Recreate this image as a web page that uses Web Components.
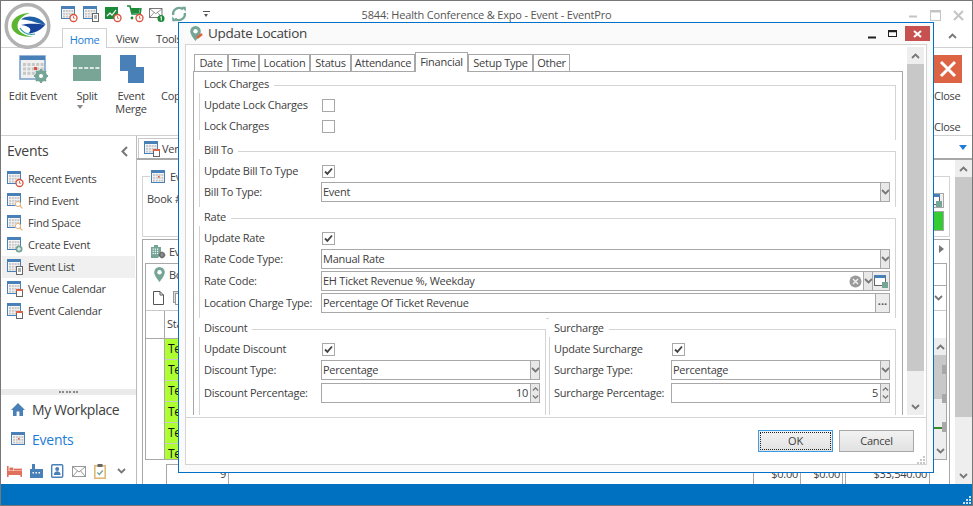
<!DOCTYPE html>
<html lang="en"><head><meta charset="utf-8"><title>EventPro</title>
<style>
html,body{margin:0;padding:0;background:#fff}
body{font:11px "Open Sans","Noto Sans","Liberation Sans",sans-serif;letter-spacing:-.25px;color:#404040;width:973px;height:506px;overflow:hidden}
</style></head><body>
<app-window>
  <title-bar slot="title">5844: Health Conference &amp; Expo - Event - EventPro</title-bar>
  <ribbon-tabs slot="tabs"></ribbon-tabs>
  <ribbon-bar slot="ribbon"></ribbon-bar>
  <side-nav slot="nav"></side-nav>
  <work-area slot="work"></work-area>
  <status-bar slot="status"></status-bar>
  <update-dialog slot="dialog"></update-dialog>
</app-window>
<script>
const BL='#4a80b8',TEAL='#74a596',GR='#a8a8a8';
function grid(x,y,cols,rows,s,g,c){let o='';for(let j=0;j<rows;j++)for(let i=0;i<cols;i++)o+=`<rect x="${x+i*(s+g)}" y="${y+j*(s+g)}" width="${s}" height="${s}" fill="${c}"/>`;return o}
const cal=(c=BL)=>`<rect x=".5" y=".5" width="13" height="12" fill="#f5f5f5" stroke="${c}"/><rect x="1" y="1" width="12" height="2" fill="${c}"/>`+grid(2,4,4,3,2,.8,'#c9c9c9');
const redClock=`<circle cx="12.5" cy="12" r="3.5" fill="#fff" stroke="#d9503c" stroke-width="1.3"/><path d="M12.5 10v2.2h1.6" stroke="#d9503c" fill="none" stroke-width=".8"/>`;
const ICONS={
 'cal-clock':[16,16,cal()+redClock],
 'cal-doc':[16,16,cal()+`<rect x="9.5" y="7.5" width="6" height="8" fill="#fff" stroke="#666"/><path d="M11 10h3M11 12h3" stroke="#666"/>`],
 'cal-search':[16,16,cal()+`<circle cx="11" cy="11" r="2.6" fill="#fff" stroke="#e8b27a"/><path d="M13 13l2.4 2.4" stroke="#e8b27a" stroke-width="1.2"/>`],
 'cal-plus':[16,16,cal()+`<circle cx="12" cy="12" r="3.5" fill="${TEAL}"/><path d="M10 12h4M12 10v4" stroke="#fff"/>`],
 'cal-cal':[16,16,cal()+`<rect x="9.5" y="8.5" width="6" height="7" fill="#fff" stroke="#666"/><rect x="9" y="8" width="7" height="2" fill="#dc6444"/>`],
 'cal':[15,14,cal()+`<rect x="7" y="6" width="1.6" height="1.6" fill="#d9503c"/>`],
 'chart-clock':[16,16,`<rect x="0" y="1" width="13" height="12" fill="#1d8a3a"/><path d="M2 10l3-3 2 2 4-5" stroke="#fff" stroke-width="1.2" fill="none"/>`+redClock],
 'cart-clock':[16,18,`<path d="M0 1h3l2 8h8l1-6" stroke="#1d8a3a" stroke-width="1.6" fill="none"/><path d="M4 3h9l-1 5H5z" fill="#1d8a3a"/><circle cx="5" cy="13" r="1.4" fill="#1d8a3a"/>`+redClock.replace(/cy="12"/,'cy="13"').replace('M12.5 10v2.2h1.6','M12.5 11v2.2h1.6')],
 'mail-one':[16,16,`<rect x=".5" y="2.5" width="12.5" height="9" fill="#fff" stroke="#777"/><path d="M1 3l5.7 4.6L13 3M1 11l4.2-4.6M13 11L8.4 6.6" stroke="#777" fill="none" stroke-width=".8"/><circle cx="12" cy="12.5" r="3.5" fill="#1d8a3a"/><path d="M11.3 11.2l1-.7v4" stroke="#fff" fill="none"/>`],
 'sync':[16,16,`<path d="M2.2 9A6 6 0 0 1 12 3.4" stroke="#74a596" stroke-width="2.4" fill="none"/><path d="M10.2 .8h4.6v4.6z" fill="#74a596"/><path d="M13.8 7A6 6 0 0 1 4 12.6" stroke="#74a596" stroke-width="2.4" fill="none"/><path d="M5.8 15.2H1.2v-4.6z" fill="#74a596"/>`],
 'edit-event':[29,28,`<rect x="1" y="1" width="25" height="23" fill="#f0f0f0" stroke="#7ea3cc" stroke-width="1.6"/><rect x="1" y="1" width="25" height="4" fill="${BL}"/>`+grid(4,8,5,3,3,1.4,'#c8c8c8')+`<rect x="15" y="12" width="3" height="3" fill="#d9503c"/><circle cx="22" cy="21" r="4.6" fill="none" stroke="${TEAL}" stroke-width="3"/><path d="M22 14v14M15 21h14M17 16l10 10M27 16L17 26" stroke="${TEAL}" stroke-width="2"/><circle cx="22" cy="21" r="2" fill="#fff"/>`],
 'split':[28,26,`<rect width="28" height="26" fill="#78a595"/><path d="M0 13h28" stroke="#fff" stroke-width="1.4" stroke-dasharray="4 1.6"/>`],
 'merge':[24,28,`<rect x="0" y="0" width="16" height="16" fill="#4a80b8"/><rect x="8" y="12" width="16" height="16" fill="#4a80b8"/>`],
 'close':[28,28,`<rect width="28" height="28" fill="#dc6444"/><path d="M7 7l14 14M21 7L7 21" stroke="#fff" stroke-width="3"/>`],
 'pin':[11,15,`<path d="M5.5 0A5.3 5.3 0 0 0 .2 5.3C.2 9 5.5 15 5.5 15s5.3-6 5.3-9.7A5.3 5.3 0 0 0 5.5 0z" fill="${TEAL}"/><circle cx="5.5" cy="5.3" r="2.2" fill="#fff"/>`],
 'pin-edit':[14,15,`<path d="M5.5 0A5.3 5.3 0 0 0 .2 5.3C.2 9 5.5 15 5.5 15s5.3-6 5.3-9.7A5.3 5.3 0 0 0 5.5 0z" fill="${TEAL}"/><circle cx="5.5" cy="5.3" r="2.2" fill="#fff"/><path d="M7 12l5-4" stroke="#e0603e" stroke-width="2.4"/>`],
 'bld-gear':[16,15,`<path d="M1 14V3h3V1h4v2h3v6l-3 5z" fill="${TEAL}"/>`+grid(2.6,4.5,3,3,1.2,1,'#fff')+`<circle cx="12" cy="11" r="2.2" fill="#fff" stroke="#666" stroke-width="1.6"/><path d="M12 7.5v7M8.5 11h7" stroke="#666" stroke-width="1"/>`],
 'page':[11,14,`<path d="M.5.5h6.5l3.5 3.5v9.5H.5z" fill="#fff" stroke="#555"/><path d="M7 .5V4h3.5" fill="none" stroke="#555"/>`],
 'page2':[11,14,`<rect x=".5" y=".5" width="8" height="11" fill="#ddd" stroke="#999"/><rect x="2.5" y="2.5" width="8" height="11" fill="#fff" stroke="#999"/>`],
 'house':[14,13,`<path d="M7 0L0 7h2v6h3.6V8.6h2.8V13H12V7h2z" fill="${BL}"/>`],
 'bed':[15,11,`<path d="M0 0h1.6v5H15v6h-1.6V9H1.6v2H0z" fill="#e0705a"/><rect x="2.4" y="1.6" width="4" height="3" fill="#e0705a"/><rect x="7" y="2.6" width="8" height="2" fill="#e0705a"/>`],
 'factory':[13,14,`<path d="M2 0h3v5h8v9H0V5h2z" fill="${BL}"/>`+grid(2.5,8,3,1,1.5,1.5,'#fff')],
 'contact':[13,14,`<rect x=".7" y=".7" width="11" height="12.6" rx="1" fill="#fff" stroke="${BL}" stroke-width="1.4"/><circle cx="6.2" cy="5" r="2" fill="${BL}"/><path d="M2.8 11c0-5 6.8-5 6.8 0z" fill="${BL}"/>`],
 'mail':[14,11,`<rect x=".5" y=".5" width="13" height="10" fill="#fff" stroke="#999"/><path d="M1 1l6 5 6-5M1 10l4.4-5M13 10L8.6 5" stroke="#999" fill="none"/>`],
 'clip':[12,15,`<rect x=".8" y="1.8" width="10.4" height="12.4" fill="#fff" stroke="#e0b878" stroke-width="1.6"/><rect x="3.5" y="0" width="5" height="3" fill="#666"/><path d="M3.4 8.5l2 2 3.4-4" stroke="${TEAL}" stroke-width="1.4" fill="none"/>`],
 'chev-down':[9,6,`<path d="M1 1l3.5 3.5L8 1" fill="none" stroke="#777" stroke-width="1.8"/>`],
 'chev-up':[9,6,`<path d="M1 5l3.5-3.5L8 5" fill="none" stroke="#777" stroke-width="1.8"/>`],
 'chev-left':[7,11,`<path d="M6 1L1.5 5.5 6 10" fill="none" stroke="#777" stroke-width="2"/>`],
 'lookup':[14,13,`<rect x=".5" y=".5" width="11" height="10" fill="#fff" stroke="#666"/><rect x="0" y="0" width="12" height="3" fill="${BL}"/><rect x="8" y="7" width="6" height="6" fill="#74a596"/>`],
};
function def(name,css,html,extra){
  class E extends HTMLElement{
    constructor(){super();this.attachShadow({mode:'open'}).innerHTML=`<style>${css}</style>${html}`;if(extra)extra.call(this)}
  }
  customElements.define(name,E);
}
class AppIcon extends HTMLElement{
  constructor(){super();this.attachShadow({mode:'open'})}
  connectedCallback(){const[w,h,b]=ICONS[this.getAttribute('name')];
    this.shadowRoot.innerHTML=`<style>:host{display:inline-flex;flex:none;width:${w}px;height:${h}px}svg{display:block;overflow:visible}</style><svg width="${w}" height="${h}" viewBox="0 0 ${w} ${h}">${b}</svg>`}
}
customElements.define('app-icon',AppIcon);

def('app-window',`
 :host{display:block;position:relative;box-sizing:border-box;width:973px;height:506px;border:1px solid #777;background:#fff;overflow:hidden}
 .body{display:flex;height:348px}
 .dlg{position:absolute;left:177px;top:21px}
 .logo{position:absolute;left:3px;top:2px}
`,`<slot name="title"></slot><slot name="tabs"></slot><slot name="ribbon"></slot>
 <div class="body"><slot name="nav"></slot><slot name="work"></slot></div>
 <slot name="status"></slot>
 <svg class="logo" width="47" height="46" viewBox="0 0 47 46">
  <circle cx="23.5" cy="23" r="21.3" fill="#fff" stroke="#b2b2b2" stroke-width="3.5"/>
  <path d="M26 10C15 10 7.500 16 7.500 22.500 7.500 29 16 35 29 33.500 21 33 13.500 29 13.500 23 13.500 17 19 12 26 10z" fill="#5cb531"/>
  <path d="M17 16.500C23 11 36 13 41.500 21.500 36 21.500 24 16 17 16.500z" fill="#1e5fa8"/>
  <path d="M17 22C24 20 35 21 41.500 21.500 37 27 31 30 24 30.500 29 27 26 23 17 22z" fill="#17449a"/>
  <path d="M16 25c3 5 9 7 15 6" stroke="#2c9fb0" stroke-width="1.200" fill="none"/>
 </svg>
 <div class="dlg"><slot name="dialog"></slot></div>`);

def('title-bar',`
 :host{display:grid;grid-template-columns:1fr auto 1fr;align-items:center;height:24px;color:#555;letter-spacing:-.18px}
 .q{display:flex;align-items:center;padding-left:60px;gap:6px;height:16px;margin-top:1px}
 .t{margin-top:2px}
 .c{display:flex;justify-content:flex-end;align-items:center;gap:12px;padding-right:8px;margin-top:4px}
 .dd{margin-left:10px;width:7px;height:5px;border-top:1px solid #555;position:relative}
 .dd::after{content:"";position:absolute;left:1px;top:2px;border:2.5px solid transparent;border-top:3px solid #555;border-bottom:0}
`,`<div class="q"><app-icon name="cal-clock"></app-icon><app-icon name="cal-doc"></app-icon><app-icon name="chart-clock"></app-icon><app-icon name="cart-clock"></app-icon><app-icon name="mail-one"></app-icon><app-icon name="sync"></app-icon><span class="dd"></span></div>
 <div class="t"><slot></slot></div>
 <div class="c"><svg width="10" height="10"><path d="M1 6.500h8" stroke="#c4c4c4" stroke-width="2"/></svg><svg width="11" height="11"><rect x=".5" y=".5" width="10" height="10" fill="none" stroke="#c4c4c4"/><path d="M0 1.500h11" stroke="#c4c4c4" stroke-width="2"/></svg><svg width="11" height="11"><path d="M1 1l9 9M10 1l-9 9" stroke="#c4c4c4" stroke-width="2"/></svg></div>`);

def('ribbon-tabs',`
 :host{display:flex;height:23px;box-sizing:border-box;border-bottom:1px solid #d0d0d0;padding-left:61px;align-items:flex-end;font-size:11px;letter-spacing:-.4px;position:relative}
 span{display:block;line-height:17px}
 .h{box-sizing:border-box;width:45px;height:20px;border:1px solid #d0d0d0;border-bottom:0;background:#fff;color:#1c7cd6;text-align:center;margin-bottom:-1px;padding-top:2px}
 .v{margin-left:9px;width:40px}
 .e{margin-left:auto;margin-right:15px;align-self:center}
`,`<span class="h">Home</span><span class="v">View</span><span>Tools</span><app-icon class="e" name="chev-up"></app-icon>`);

def('ribbon-item',`
 :host{display:flex;flex-direction:column;align-items:center;box-sizing:border-box;padding-top:7px;text-align:center;flex:none;line-height:13px}
 .i{height:28px;display:flex;margin-bottom:6px}
 span{white-space:pre-line}
`,`<div class="i"><slot name="icon"></slot></div><span><slot></slot></span>`);

def('ribbon-bar',`
 :host{display:flex;height:88px;box-sizing:border-box;border-bottom:1px solid #d0d0d0;color:#404040}
 .close{margin-left:auto;width:38px;display:flex;flex-direction:column;align-items:flex-start;padding-top:7px;line-height:13px}
 .close .l{margin-top:6px}.close .m{margin-top:18px}
 .down{align-self:center;width:0;height:0;margin-top:3px;border:3px solid transparent;border-top:4px solid #888;border-bottom:0;display:block}
 .cop{padding-left:11px;margin-top:41px;line-height:13px}
`,`<ribbon-item style="width:58px;margin-left:3px"><app-icon slot="icon" name="edit-event"></app-icon>Edit Event</ribbon-item>
 <ribbon-item style="width:50px"><app-icon slot="icon" name="split"></app-icon>Split<i class="down"></i></ribbon-item>
 <ribbon-item style="width:38px"><app-icon slot="icon" name="merge" style="margin-left:2px"></app-icon>Event
Merge</ribbon-item>
 <div class="cop">Cop</div>
 <div class="close"><app-icon name="close"></app-icon><span class="l">Close</span><span class="m">Close</span></div>`);

def('nav-item',`
 :host{display:flex;align-items:center;gap:5px;height:22px;padding-left:5px;margin:0 1px;font-size:11px;line-height:20px}
 :host([active]){background:#f0f0f0}
`,`<slot name="icon"></slot><slot></slot>`);

def('side-nav',`
 :host{display:flex;flex-direction:column;width:136px;flex:none;box-sizing:border-box;border-right:1px solid #bcbcbc}
 .h{display:flex;align-items:center;justify-content:space-between;height:30px;padding:0 8px 0 6px;font-size:14px;margin-bottom:2px}
 .h span{margin-top:-1px}
 .sp{flex:1}
 .split{height:6px;background:#ebebeb;display:flex;justify-content:center;align-items:center}
 .split i{width:19px;height:2px;background:repeating-linear-gradient(90deg,#888 0 2px,transparent 2px 3.400px)}
 .big{display:flex;align-items:center;gap:7px;height:30px;box-sizing:border-box;padding:0 0 2px 10px;font-size:14px;letter-spacing:-.4px}
 .blue{color:#1c7cd6;letter-spacing:-.25px;gap:6px}
 .ic{display:flex;align-items:center;height:29px;box-sizing:border-box;padding:3px 0 0 6px;gap:8px}
`,`<div class="h"><span>Events</span><app-icon name="chev-left"></app-icon></div>
 <nav-item><app-icon slot="icon" name="cal-clock"></app-icon>Recent Events</nav-item>
 <nav-item><app-icon slot="icon" name="cal-search"></app-icon>Find Event</nav-item>
 <nav-item><app-icon slot="icon" name="cal-search"></app-icon>Find Space</nav-item>
 <nav-item><app-icon slot="icon" name="cal-plus"></app-icon>Create Event</nav-item>
 <nav-item active><app-icon slot="icon" name="cal-doc"></app-icon>Event List</nav-item>
 <nav-item><app-icon slot="icon" name="cal-cal"></app-icon>Venue Calendar</nav-item>
 <nav-item><app-icon slot="icon" name="cal-cal"></app-icon>Event Calendar</nav-item>
 <div class="sp"></div><div class="split"><i></i></div>
 <div class="big"><app-icon name="house"></app-icon><span>My Workplace</span></div>
 <div class="big blue"><app-icon name="cal"></app-icon><span>Events</span></div>
 <div class="ic"><app-icon name="bed"></app-icon><app-icon name="factory"></app-icon><app-icon name="contact"></app-icon><app-icon name="mail"></app-icon><app-icon name="clip"></app-icon><app-icon name="chev-down" style="margin-left:3px"></app-icon></div>`);

def('v-scroll',`
 :host{display:flex;flex-direction:column;width:var(--w,17px);flex:none;background:#eee}
 .b{height:var(--bh,17px);display:flex;align-items:center;justify-content:center;flex:none}
 .t{height:var(--th,240px);background:#c8c8c8;flex:none}
 .s{flex:1}
`,`<div class="b"><app-icon name="chev-up"></app-icon></div><div class="t"></div><div class="s"></div><div class="b"><app-icon name="chev-down"></app-icon></div>`);

def('work-area',`
 :host{display:flex;flex-direction:column;flex:1;min-width:0;overflow:hidden}
 .strip{display:flex;height:24px;box-sizing:border-box;border-bottom:2px solid #a8a8a8;padding:2px 5px 0 1px;justify-content:space-between}
 .tab{display:flex;align-items:center;gap:2px;width:60px;box-sizing:border-box;border:1px solid #c8c8c8;border-bottom:0;padding-left:5px}
 .arr{align-self:center;margin-top:-2px;width:0;height:0;border:4px solid transparent;border-top:5px solid #1c7cd6;border-bottom:0}
 .main{display:flex;flex:1;min-height:0}
 .col{flex:1;min-width:0;display:flex;flex-direction:column;padding:16px 5px 0 5px;box-sizing:border-box}
 .g1{box-sizing:border-box;height:61px;border:1px solid #d4d4d4;display:flex;justify-content:space-between;position:relative;padding:16px 5px 0 4px}
 .g1>span{margin-top:-2px}
 .lg{position:absolute;left:7px;top:-8px;display:flex;align-items:center;gap:4px;background:#fff;padding:0 1px}
 .rc{display:flex;flex-direction:column;gap:3px}
 .btn{width:30px;height:15px;box-sizing:border-box;border:1px solid ${GR};background:#eee;display:flex;justify-content:flex-end;align-items:center;padding-right:1px}
 .grn{width:30px;height:20px;box-sizing:border-box;border:1px solid ${GR};background:#33cc33}
 .g2{flex:1;margin-top:2px;border:1px solid ${GR};border-bottom:0;display:flex;flex-direction:column;min-height:0;padding:0 2px}
 .head{height:24px;display:flex;align-items:center;gap:3px;padding-left:5px;position:relative}
 .tri{position:absolute;right:3px;top:5px;width:0;height:0;border:4px solid transparent;border-left:5px solid #777;border-right:0}
 .g3{height:197px;flex:none;box-sizing:border-box;border:1px solid ${GR};display:flex;flex-direction:column}
 .bo{height:21px;display:flex;align-items:center;gap:4px;padding-left:8px}
 .tb{height:26px;flex:none;display:flex;align-items:center;gap:9px;padding:0 0 0 7px;border-bottom:1px solid #c8c8c8;box-sizing:border-box;position:relative}
 .dbox{position:absolute;right:0;top:0;width:40px;height:25px;border-top:1px solid ${GR};display:flex;align-items:center;justify-content:flex-end;padding-right:3px;box-sizing:border-box}
 .hdr{height:28px;display:flex;border-bottom:1px solid ${GR};box-sizing:border-box;flex:none}
 .hdr i{display:block;width:18px;border-right:1px solid ${GR}}
 .hdr span{padding:5px 0 0 2px;font-size:11px}
 .rows{flex:1;display:flex;min-height:0}
 .gut{width:18px;flex:none;border-right:1px solid ${GR}}
 .cells{width:40px;flex:none}
 .cell{height:21px;box-sizing:border-box;background:#adff2f;border-bottom:1px solid #c8c8c8;padding-left:3px;color:#111;font-size:12px;line-height:20px}
 .cell:last-child{height:15px;border-bottom:0}
 .rp{margin:-1px 0 0 auto;position:relative;flex:none;width:12px;--w:12px;--bh:17px;--th:44px;display:flex}
 .mk{position:absolute;right:0;width:4px;background:#a8a8a8}
 .gl{position:absolute;right:4px;top:89px;width:8px;height:1.500px;background:#3a8a30}
 .foot{flex:1;display:flex;padding:4px 0 0 21px;text-align:right}
 .c{box-sizing:border-box;border:1px solid ${GR};border-bottom:0;padding:1px 2px 0 0;height:20px}
`,`<div class="strip"><div class="tab"><app-icon name="cal-cal"></app-icon><span>Ven</span></div><i class="arr"></i></div>
 <div class="main"><div class="col">
   <div class="g1"><div class="lg"><app-icon name="cal"></app-icon><span>Ev</span></div><span>Book #</span><div class="rc"><div class="btn"><app-icon name="lookup"></app-icon></div><div class="grn"></div></div></div>
   <div class="g2">
     <div class="head"><app-icon name="bld-gear"></app-icon><span>Ev</span><i class="tri"></i></div>
     <div class="g3">
       <div class="bo"><app-icon name="pin"></app-icon><span>Bo</span></div>
       <div class="tb"><app-icon name="page"></app-icon><app-icon name="page2"></app-icon><div class="dbox"><app-icon name="chev-down"></app-icon></div></div>
       <div class="hdr"><i></i><span>Sta</span></div>
       <div class="rows"><div class="gut"></div><div class="cells"><div class="cell">Te</div><div class="cell">Te</div><div class="cell">Te</div><div class="cell">Te</div><div class="cell">Te</div><div class="cell">Te</div></div>
         <div class="rp"><v-scroll></v-scroll><i class="mk" style="top:27px;height:9px"></i><i class="mk" style="top:56px;height:9px"></i><i class="mk" style="top:84px;height:10px"></i><i class="gl"></i></div></div>
     </div>
     <div class="foot"><div class="c" style="width:63px">9</div><div style="width:524px"></div><div class="c" style="width:48px">$0.00</div><div class="c" style="width:42px;border-left:0">$0.00</div><div class="c" style="width:85px;margin-left:2px">$33,540.00</div></div>
   </div>
 </div><v-scroll></v-scroll></div>`);

def('status-bar',`
 :host{display:flex;justify-content:flex-end;align-items:flex-end;height:21px;background:#0070c0;padding:0 1px 1px 0;box-sizing:border-box}
`,`<svg width="9" height="9"><path d="M7 1h2v2H7zM4 4h2v2H4zM7 4h2v2H7zM1 7h2v2H1zM4 7h2v2H4zM7 7h2v2H7z" fill="#cfe2f3"/></svg>`);

def('form-group',`
 :host{display:block;flex:1;min-width:0;margin-top:4px}
 fieldset{margin:0;padding:2px 5px var(--pb,3px) 4px;border:1px solid #d4d4d4;border-bottom:0;min-width:0}
 legend{padding:0 5px;margin-left:-5px;line-height:11px;height:15px;box-sizing:border-box}
`,`<fieldset><legend><slot name="t"></slot></legend><slot></slot></fieldset>`);

def('form-row',`
 :host{display:grid;grid-template-columns:117px 1fr;height:22px;align-items:start}
 :host([check]){height:21px}
 :host([tall]){height:23px}
 .l{line-height:20px;white-space:nowrap}
`,`<div class="l"><slot name="l"></slot></div><div><slot></slot></div>`);

def('check-box',`
 :host{display:block;box-sizing:border-box;width:13px;height:13px;border:1px solid ${GR};margin:4px 0 0 1px;background:#fff}
 svg{display:none}
 :host([on]) svg{display:block}
`,`<svg width="11" height="11"><path d="M2 5.500l2.400 2.400L9 2.500" fill="none" stroke="#444" stroke-width="1.800"/></svg>`);

def('combo-box',`
 :host{display:flex;box-sizing:border-box;height:20px;border:1px solid ${GR};background:#fff;align-items:stretch}
 .tx{flex:1;padding-left:1px;line-height:18px;white-space:nowrap;overflow:hidden}
 :host([num]) .tx{text-align:right;padding-right:2px}
 .b{width:8px;flex:none;background:#e8e8e8;border-left:1px solid ${GR};display:flex;align-items:center;justify-content:center;overflow:hidden}
 .sp{width:8px;flex:none;background:#e8e8e8;border-left:1px solid ${GR};display:none;flex-direction:column;justify-content:space-around;align-items:center;padding:1px 0;overflow:hidden}
 .sp app-icon{transform:scale(.75);height:6px}
 :host([num]) .sp{display:flex}
 :host([num]) .b{display:none}
 :host([nodrop]) .b{display:none}
 ::slotted(*){flex:none}
`,`<div class="tx"><slot></slot></div><slot name="end"></slot><div class="b"><app-icon name="chev-down"></app-icon></div><div class="sp"><app-icon name="chev-up"></app-icon><app-icon name="chev-down"></app-icon></div><slot name="after"></slot>`);

def('end-btn',`:host{display:flex;align-items:center;justify-content:center;background:#ececec;border-left:1px solid ${GR};box-sizing:border-box;width:14px;color:#555;font-weight:700;line-height:1;letter-spacing:0}`,`<slot></slot>`);
def('clear-btn',`:host{display:flex;align-items:center;margin-right:1px}`,`<svg width="13" height="13"><circle cx="6.500" cy="6.500" r="6" fill="#9a9a9a"/><path d="M4 4l5 5M9 4l-5 5" stroke="#eee" stroke-width="1.500"/></svg>`);

def('dialog-tabs',`
 :host{display:flex;align-items:flex-end;height:18px;margin-left:1px;position:relative;z-index:1}
 span{display:block;box-sizing:border-box;height:17px;border:1px solid ${GR};border-bottom:0;background:#fff;text-align:center;line-height:16px}
 .a{height:20px;margin-bottom:-1px;line-height:17px}
`,`<span style="width:34px">Date</span><span style="width:31px">Time</span><span style="width:51px">Location</span><span style="width:41px">Status</span><span style="width:64px">Attendance</span><span class="a" style="width:53px">Financial</span><span style="width:65px">Setup Type</span><span style="width:37px">Other</span>`);

def('update-dialog',`
 :host{display:flex;flex-direction:column;box-sizing:border-box;width:756px;height:451px;border:1px solid #0070c8;background:#fafafa;padding:0 6px 7px}
 .tb{height:21px;flex:none;display:flex;align-items:center;margin:0 -6px;padding:0 3px 0 11px;box-sizing:border-box}
 .tt{font-size:13.5px;letter-spacing:-.3px;color:#404040;margin-left:4px;flex:1;line-height:21px}
 .ctl{display:flex;align-items:center;gap:12px}
 .red{width:25px;height:15px;background:#c75050;display:flex;align-items:center;justify-content:center;margin-left:-4px}
 .frame{flex:1;display:flex;flex-direction:column;background:#fff;border:1px solid #d4d4d4;min-height:0}
 .scroll{height:372px;display:flex;flex:none;border-bottom:1px solid #d4d4d4;overflow:hidden}
 .pane{width:717px;height:370px;overflow:hidden;flex:none;padding:8px 0 0 7px;box-sizing:border-box}
 .panel{box-sizing:border-box;width:710px;border:1px solid ${GR};border-bottom:0;padding:6px 6px 0 5px;height:400px}
 .two{display:flex;gap:3px;position:relative}
 .two::before{content:"";position:absolute;left:347px;top:0;width:3px;height:1px;background:#d4d4d4}
 .two form-group{flex:0 0 347px;--pb:20px}
 .sb{margin:2px 0 2px 4px;--th:307px}
 .f{flex:1;display:flex;justify-content:flex-end;gap:6px;padding:12px 12px 0 0;position:relative}
 .bt{box-sizing:border-box;width:75px;height:22px;border:1px solid ${GR};background:linear-gradient(#f2f2f2,#e2e2e2);text-align:center;font-size:11px;line-height:20px;color:#404040}
 .ok{border-color:#3a9be6;position:relative}
 .ok::after{content:"";position:absolute;inset:1px;border:1px dotted #222}
 .grip{position:absolute;right:1px;bottom:0}
`,`<div class="tb"><app-icon name="pin-edit"></app-icon><div class="tt">Update Location</div>
   <div class="ctl"><svg width="8" height="10"><path d="M0 8.500h8" stroke="#222" stroke-width="2"/></svg><svg width="9" height="7"><rect x=".5" y=".5" width="8" height="6" fill="none" stroke="#222"/><path d="M0 1.500h9" stroke="#222" stroke-width="1.500"/></svg><div class="red"><svg width="9" height="8"><path d="M1 1l7 6M8 1L1 7" stroke="#fff" stroke-width="2"/></svg></div></div></div>
 <div class="frame"><div class="scroll"><div class="pane"><dialog-tabs></dialog-tabs><div class="panel">
   <form-group style="margin-top:0"><span slot="t">Lock Charges</span>
     <form-row check><span slot="l">Update Lock Charges</span><check-box></check-box></form-row>
     <form-row check><span slot="l">Lock Charges</span><check-box></check-box></form-row></form-group>
   <form-group><span slot="t">Bill To</span>
     <form-row check><span slot="l">Update Bill To Type</span><check-box on></check-box></form-row>
     <form-row><span slot="l">Bill To Type:</span><combo-box>Event</combo-box></form-row></form-group>
   <form-group><span slot="t">Rate</span>
     <form-row check><span slot="l">Update Rate</span><check-box on></check-box></form-row>
     <form-row><span slot="l">Rate Code Type:</span><combo-box>Manual Rate</combo-box></form-row>
     <form-row><span slot="l">Rate Code:</span><combo-box>EH Ticket Revenue %, Weekday<clear-btn slot="end"></clear-btn><end-btn slot="after" style="width:17px"><app-icon name="lookup"></app-icon></end-btn></combo-box></form-row>
     <form-row><span slot="l">Location Charge Type:</span><combo-box nodrop>Percentage Of Ticket Revenue<end-btn slot="end">···</end-btn></combo-box></form-row></form-group>
   <div class="two">
    <form-group><span slot="t">Discount</span>
     <form-row check><span slot="l">Update Discount</span><check-box on></check-box></form-row>
     <form-row tall><span slot="l">Discount Type:</span><combo-box>Percentage</combo-box></form-row>
     <form-row><span slot="l">Discount Percentage:</span><combo-box num>10</combo-box></form-row></form-group>
    <form-group><span slot="t">Surcharge</span>
     <form-row check><span slot="l">Update Surcharge</span><check-box on></check-box></form-row>
     <form-row tall><span slot="l">Surcharge Type:</span><combo-box>Percentage</combo-box></form-row>
     <form-row><span slot="l">Surcharge Percentage:</span><combo-box num>5</combo-box></form-row></form-group>
   </div>
 </div></div><v-scroll class="sb"></v-scroll></div>
 <div class="f"><div class="bt ok">OK</div><div class="bt">Cancel</div>
  <svg class="grip" width="8" height="8"><path d="M6 0h2v2H6zM3 3h2v2H3zM6 3h2v2H6zM0 6h2v2H0zM3 6h2v2H3zM6 6h2v2H6z" fill="#c8c8c8"/></svg></div></div>`);
</script>
</body></html>
